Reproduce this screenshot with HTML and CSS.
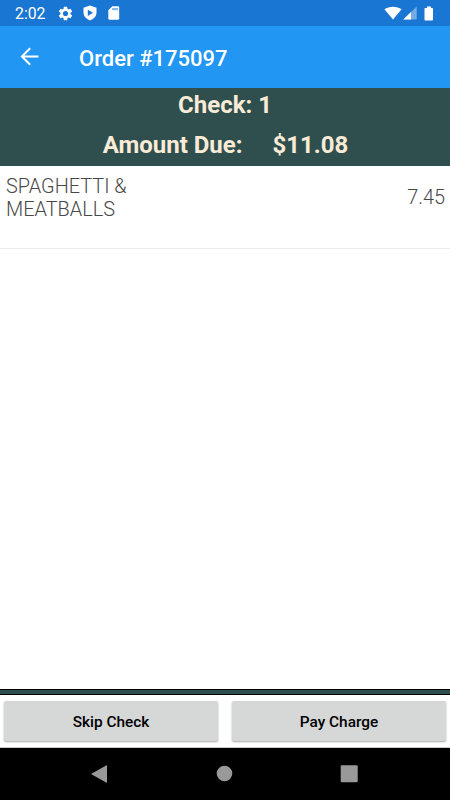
FILE: index.html
```
<!DOCTYPE html>
<html lang="en">
<head>
    <meta charset="UTF-8">
    <meta name="viewport" content="width=device-width, initial-scale=1.0">
    <title>Order #175097</title>
    <link rel="stylesheet" href="styles.css">
</head>
<body>
    <div class="status-bar">
        <span class="clock">2:02</span>
        <svg class="icon-settings" width="17" height="17" viewBox="0 0 24 24" fill="#fff"><path d="M19.14 12.94c.04-.3.06-.61.06-.94 0-.32-.02-.64-.07-.94l2.03-1.58a.49.49 0 0 0 .12-.61l-1.92-3.32a.49.49 0 0 0-.59-.22l-2.39.96c-.5-.38-1.03-.7-1.62-.94l-.36-2.54a.48.48 0 0 0-.48-.41h-3.84a.47.47 0 0 0-.47.41l-.36 2.54c-.59.24-1.13.57-1.62.94l-2.39-.96a.48.48 0 0 0-.59.22L2.74 8.87a.47.47 0 0 0 .12.61l2.03 1.58c-.05.3-.09.63-.09.94s.02.64.07.94l-2.03 1.58a.49.49 0 0 0-.12.61l1.92 3.32c.12.22.37.29.59.22l2.39-.96c.5.38 1.03.7 1.62.94l.36 2.54c.05.24.24.41.48.41h3.84c.24 0 .44-.17.47-.41l.36-2.54c.59-.24 1.13-.56 1.62-.94l2.39.96c.22.08.47 0 .59-.22l1.92-3.32a.47.47 0 0 0-.12-.61zM12 15.6a3.6 3.6 0 1 1 0-7.2 3.6 3.6 0 0 1 0 7.2z"/></svg>
        <svg class="icon-shield" width="14" height="16" viewBox="0 0 14 16"><path fill="#fff" d="M7 .5l6.500 2.300v4.700c0 3.500-2.600 6.600-6.500 7.900-3.900-1.300-6.500-4.400-6.500-7.900V2.800z"/><path fill="#1976d2" d="M4.800 4.700l5.200 3.100-5.200 3.100z"/></svg>
        <svg class="icon-sd" width="12" height="14" viewBox="0 0 12 14"><path fill="#fff" d="M4.300.2H10c.7 0 1.200.5 1.200 1.200v11.200c0 .7-.5 1.200-1.200 1.200H1.500C.8 13.800.3 13.300.3 12.600V4.300z"/><path stroke="#1976d2" stroke-width="1" d="M5 2v2.200M7 2v2.200M9 2v2.200"/></svg>
        <div class="system-icons">
            <svg width="18" height="14" viewBox="0 0 18 14"><path fill="#fff" d="M.4 3.300C5 -.2 13 -.2 17.600 3.300L9 13.600z"/></svg>
            <svg class="icon-signal" width="14" height="14" viewBox="0 0 14 14"><path fill="#fff" fill-opacity=".4" d="M13.700.5v13H.3z"/><path fill="#fff" d="M8 6v7.500H.3z"/></svg>
            <svg class="icon-battery" width="10" height="15" viewBox="0 0 10 15"><path fill="#fff" d="M3 .5h4V2h1c.7 0 1 .4 1 1v10.400c0 .6-.4 1.100-1 1.100H1.500c-.6 0-1-.5-1-1.100V3c0-.6.4-1 1-1H3z"/></svg>
        </div>
    </div>

    <div class="app-bar">
        <svg class="back" width="20" height="20" viewBox="0 0 20 20" fill="none" stroke="#fff" stroke-width="2"><path d="M18.400 9.500H3M10.200 1.200L1.900 9.500l8.300 8.300"/></svg>
        <h1>Order #175097</h1>
    </div>

    <div class="summary">
        <div class="check">Check: 1</div>
        <div class="amount"><span>Amount Due:</span><span>$11.08</span></div>
    </div>

    <div class="items">
        <div class="item">
            <span class="item-name">SPAGHETTI &amp; MEATBALLS</span>
            <span class="item-price">7.45</span>
        </div>
    </div>

    <div class="divider"></div>

    <div class="actions">
        <button class="action-button">Skip Check</button>
        <button class="action-button">Pay Charge</button>
    </div>

    <div class="nav-bar">
        <svg width="18" height="20" viewBox="0 0 18 20" fill="#999"><path d="M17 1v18L1 10z"/></svg>
        <svg width="18" height="18" viewBox="0 0 18 18" fill="#999"><circle cx="9.500" cy="8.500" r="7.800"/></svg>
        <svg width="18" height="18" viewBox="0 0 18 18" fill="#999"><rect x=".7" y=".2" width="17" height="17" rx="1"/></svg>
    </div>
</body>
</html>
```
FILE: styles.css
```
* {
    box-sizing: border-box;
}
body {
    margin: 0;
    height: 800px;
    display: flex;
    flex-direction: column;
    overflow: hidden;
    background-color: #fff;
    font-family: Roboto, sans-serif;
}
.status-bar {
    height: 26px;
    padding: 0 16px 0 15px;
    display: flex;
    align-items: center;
    background-color: #1976d2;
    color: #fff;
}
.clock {
    width: 31px;
    margin-top: 2px;
    font-size: 15.8px;
    font-weight: 400;
    line-height: 20px;
}
.icon-settings {
    margin-left: 11px;
}
.icon-shield {
    margin-left: 9px;
}
.icon-sd {
    margin-left: 11px;
}
.system-icons {
    display: flex;
    align-items: center;
    margin-left: auto;
}
.icon-battery {
    margin-left: 7px;
}
.icon-signal {
    margin-left: 1px;
}
.app-bar {
    height: 61.5px;
    padding-left: 20px;
    display: flex;
    align-items: center;
    background-color: #2196f3;
    color: #fff;
}
.app-bar h1 {
    margin: 4px 0 0 39px;
    font-size: 22px;
    font-weight: 500;
    line-height: 28px;
}
.summary {
    height: 78px;
    background-color: #2f4f4f;
    color: #faebd7;
    font-size: 24px;
    font-weight: 700;
    line-height: 39px;
    text-align: center;
}
.check {
    height: 37px;
    line-height: 35px;
}
.amount {
    padding-left: 1px;
    display: flex;
    justify-content: center;
    gap: 30px;
    line-height: 40px;
}
.items {
    flex: 1;
}
.item {
    height: 83px;
    padding: 0 5px 0 6px;
    display: flex;
    justify-content: space-between;
    border-bottom: 1px solid #ececec;
    color: #484848;
    font-size: 19.9px;
    font-weight: 300;
    line-height: 23px;
}
.item-name {
    width: 150px;
    padding-top: 9px;
}
.item-price {
    padding-top: 20px;
}
.divider {
    height: 6px;
    border: solid #000;
    border-width: 1px 0;
    background-color: #2f4f4f;
}
.actions {
    height: 53px;
    padding: 6px 4px;
    display: flex;
    gap: 14px;
    border-bottom: 1px solid #ccc;
}
.action-button {
    flex: 1;
    padding: 1px 0 0;
    border: none;
    border-radius: 2px;
    background-color: #d6d7d7;
    box-shadow: 0 1px 2px rgba(0, 0, 0, 0.35);
    color: #000;
    font-family: inherit;
    font-size: 15.4px;
    font-weight: 500;
}
.nav-bar {
    height: 52px;
    padding: 0 92px 0 90px;
    display: flex;
    align-items: center;
    justify-content: space-between;
    background-color: #000;
}
```
